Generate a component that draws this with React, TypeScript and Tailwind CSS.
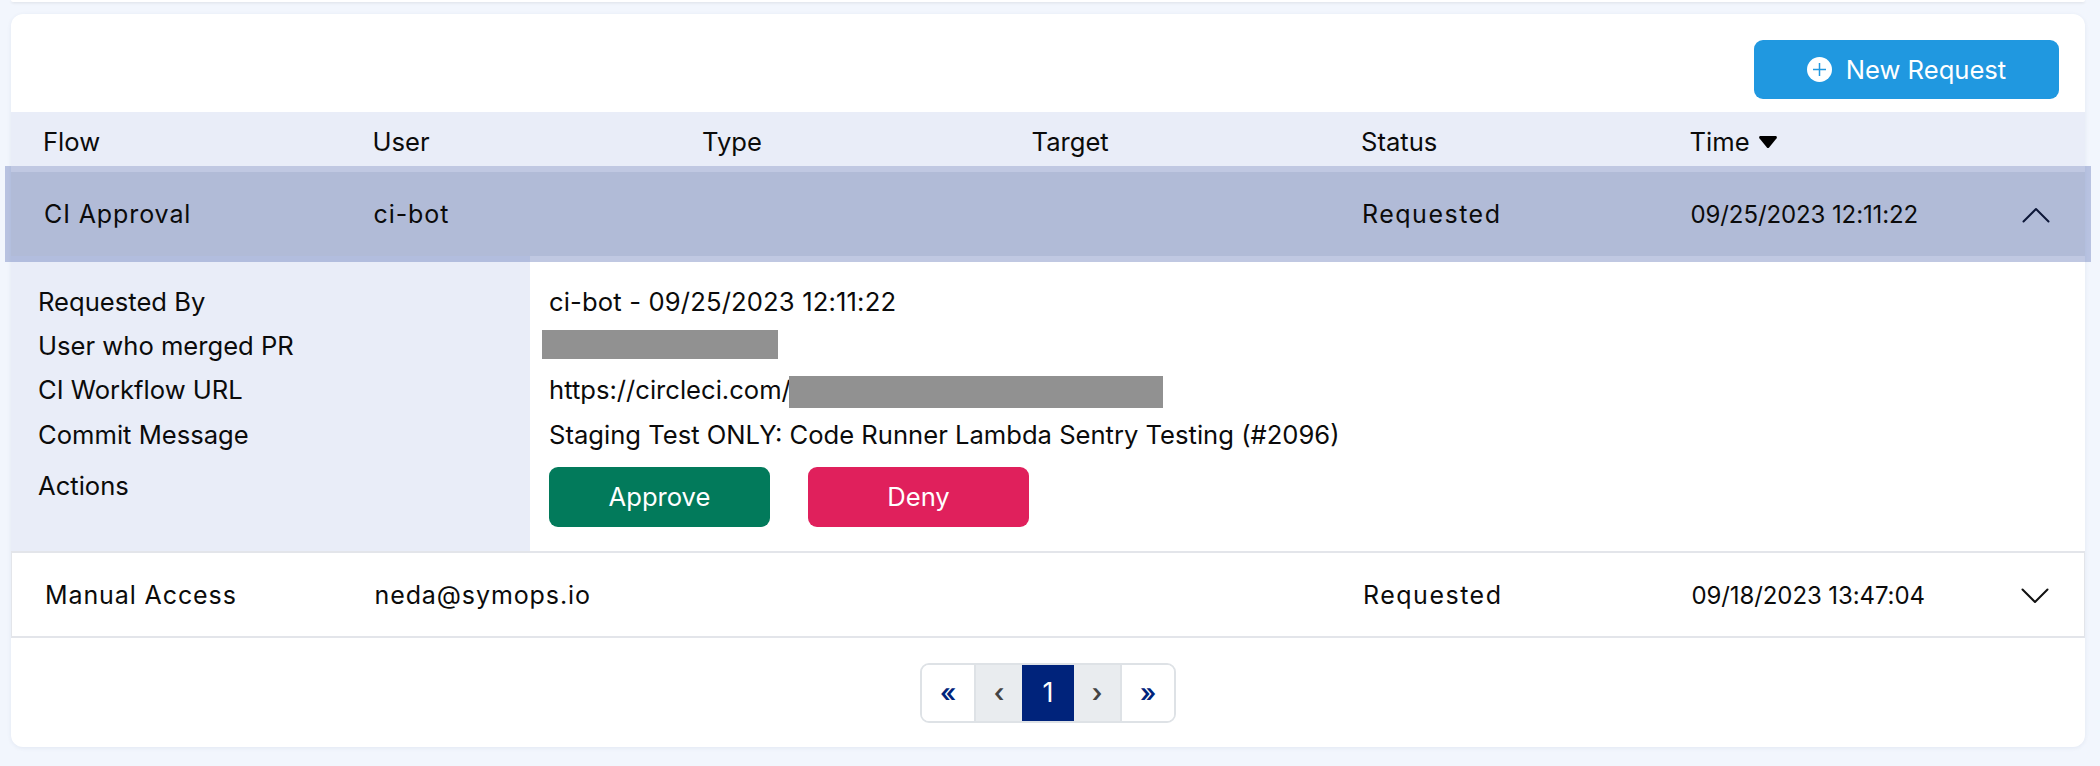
import React from 'react';

const COLS = ['Flow', 'User', 'Type', 'Target', 'Status'];

const Chevron = ({ up = false }: { up?: boolean }) => (
  <svg width="28" height="16" viewBox="0 0 28 16" fill="none" stroke={up ? '#0d1738' : '#111111'} strokeWidth="2" strokeLinecap="round" strokeLinejoin="round">
    {up ? <path d="M1.500 14.500 14 2l12.500 12.500" /> : <path d="M1.500 1.500 14 14 26.500 1.500" />}
  </svg>
);

const Row = ({ flow, user, status, time, up }: { flow: string; user: string; status: string; time: string; up?: boolean }) => (
  <div className="grid h-full grid-cols-[329.500px_329.500px_329.500px_329.500px_329.500px_1fr] items-center pt-[2px] pl-[33px] text-[25px] tracking-[0.9px] text-[#0b0b0b]">
    <span>{flow}</span>
    <span>{user}</span>
    <span />
    <span />
    <span className="tracking-[1.500px]">{status}</span>
    <div className="flex items-center justify-between pr-[35px]">
      <span className="-ml-[1px] text-[24px] tracking-[-0.1px]">{time}</span>
      <Chevron up={up} />
    </div>
  </div>
);

const labelRow = 'flex items-center';

export default function App() {
  return (
    <div className="h-[766px] w-[2100px] overflow-hidden bg-[#f2f6fd] font-['Inter','Liberation_Sans',sans-serif]">
      <div className="mr-[15px] ml-[11px] h-[2px] rounded-b-xl bg-white shadow-sm" />
      <div className="mt-[12px] mr-[15px] ml-[11px] flex h-[733px] flex-col rounded-xl bg-white shadow-[0_1px_4px_rgba(40,60,120,0.08)]">
        <div className="flex h-[98px] items-start justify-end pt-[26px] pr-[26px]">
          <button type="button" className="flex h-[59px] w-[305px] items-center justify-center gap-[14px] rounded-[9px] bg-[#2098e0] text-[25.600px] text-white">
            <svg width="25" height="25" viewBox="0 0 25 25">
              <circle cx="12.500" cy="12.500" r="12.500" fill="#ffffff" />
              <path d="M12.500 6v13M6 12.500h13" stroke="#2098e0" strokeWidth="1.500" />
            </svg>
            <span className="pt-[2px]">New Request</span>
          </button>
        </div>

        <div className="grid h-[54px] grid-cols-[329.500px_329.500px_329.500px_329.500px_329.500px_1fr] items-center bg-[#e9edf8] pt-[6px] pl-[32px] text-[25.600px] text-[#0b0b0b]">
          {COLS.map((c) => (
            <span key={c}>{c}</span>
          ))}
          <span className="-ml-[1px] flex items-center gap-[9px]">
            Time
            <svg width="18" height="12" viewBox="0 0 18 12" fill="#000000">
              <path d="M1.500 0h15c1.200 0 1.800 1.300 1.100 2.200l-7.500 9.200c-.6.7-1.600.7-2.200 0L.4 2.200C-.3 1.300.3 0 1.500 0Z" />
            </svg>
          </span>
        </div>

        <div className="relative z-10 mt-[6px] h-[84px] bg-[#b1bbd7] shadow-[0_0_0_6px_rgba(90,110,180,0.38)]">
          <Row flow="CI Approval" user="ci-bot" status="Requested" time="09/25/2023 12:11:22" up />
        </div>

        <div className="flex h-[297px] border-b-2 border-[#e3e5ea] pr-px">
          <div className="flex w-[519px] flex-col bg-[#e9edf8] pt-[24px] pl-[27px] text-[25.600px] text-[#0b0b0b]">
            <div className={`h-[44px] ${labelRow}`}>Requested By</div>
            <div className={`h-[44px] ${labelRow}`}>User who merged PR</div>
            <div className={`h-[45px] ${labelRow}`}>CI Workflow URL</div>
            <div className={`h-[45px] ${labelRow}`}>Commit Message</div>
            <div className={`mt-[6px] h-[44px] ${labelRow}`}>Actions</div>
          </div>
          <div className="flex flex-1 flex-col pt-[24px] pl-[19px] text-[25.600px] text-[#0b0b0b]">
            <div className={`h-[44px] tracking-[0.150px] ${labelRow}`}>ci-bot - 09/25/2023 12:11:22</div>
            <div className="h-[44px] pt-[6px]">
              <div className="-ml-[7px] h-[29px] w-[236px] bg-[#919191]" />
            </div>
            <div className={`h-[45px] ${labelRow}`}>
              https://circleci.com/
              <div className="mt-[3px] -ml-[2px] h-[32px] w-[374px] bg-[#919191]" />
            </div>
            <div className={`h-[45px] ${labelRow}`}>Staging Test ONLY: Code Runner Lambda Sentry Testing (#2096)</div>
            <div className="mt-[9px] flex gap-[38px]">
              <button type="button" className="h-[60px] w-[221px] rounded-[9px] bg-[#027a5b] text-[25.600px] text-white">Approve</button>
              <button type="button" className="h-[60px] w-[221px] rounded-[9px] bg-[#e0205c] text-[25.600px] text-white">Deny</button>
            </div>
          </div>
        </div>

        <div className="h-[85px] border-x border-b-2 border-[#e3e5ea]">
          <Row flow="Manual Access" user="neda@symops.io" status="Requested" time="09/18/2023 13:47:04" />
        </div>

        <div className="flex justify-center pt-[25px]">
          <nav className="flex h-[60px] overflow-hidden rounded-[9px] border-2 border-[#dee2e6] text-[25.600px]">
            <span className="flex w-[52px] items-center justify-center bg-white font-semibold text-[#00237b]">«</span>
            <span className="flex w-[48px] items-center justify-center border-l-2 border-[#dee2e6] bg-[#e9ecef] font-semibold text-[#444444]">‹</span>
            <span className="flex w-[52px] items-center justify-center bg-[#00237b] text-[27px] text-white">1</span>
            <span className="flex w-[48px] items-center justify-center border-r-2 border-[#dee2e6] bg-[#e9ecef] font-semibold text-[#444444]">›</span>
            <span className="flex w-[52px] items-center justify-center bg-white font-semibold text-[#00237b]">»</span>
          </nav>
        </div>
      </div>
    </div>
  );
}
